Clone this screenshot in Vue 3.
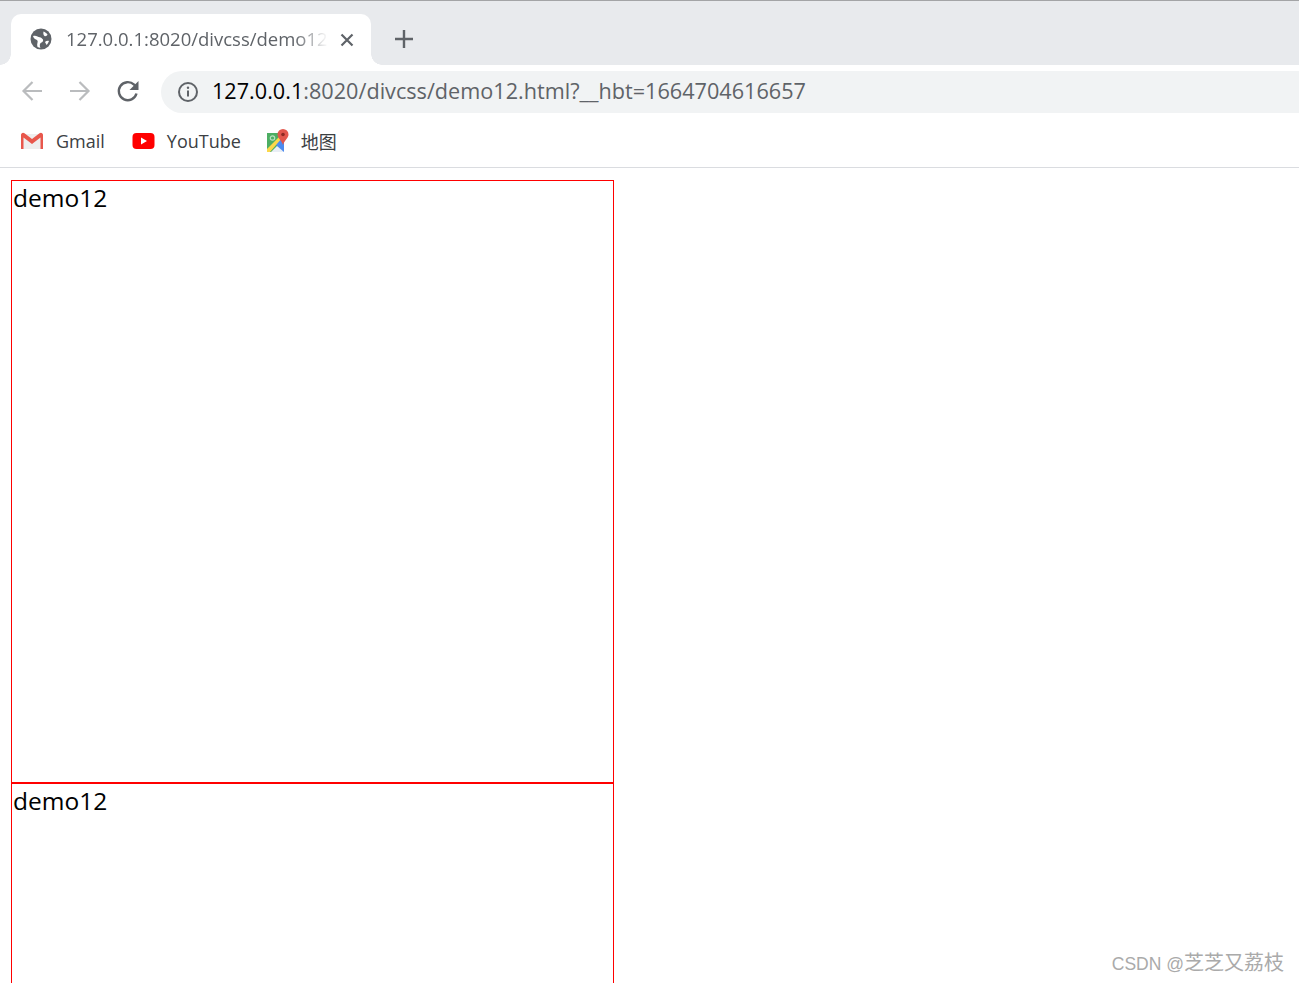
<template>
  <div class="page">
    <!-- Browser chrome -->
    <header class="chrome">
      <div class="tab-strip">
        <div class="tab">
          <svg class="favicon" width="22" height="22" viewBox="0 0 22 22">
            <circle cx="11" cy="11" r="10.500" fill="#5f6368" />
            <path d="M3 8c1.500-.5 3-.5 4.500.5s3 .5 4 1.500 2 1.500 1.500 3-2.500 1.500-3 3 0 3 .5 4c-1-.2-2-.5-3-1-.5-1.500-.5-3 0-4.500s0-2.500-1.500-3-2.500-1.500-3-3.500z" fill="#fff" />
            <path d="M13.500 3.500c1.500.5 3 1.500 4 3-.5 1.500-2 2-3 1.500s-1.500-2.500-1-4.500zM15 14c1-1 2.500-1.500 4-1-.5 1.500-1.500 3-2.500 4-.5-1-.5-1.500-1-2z" fill="#fff" />
          </svg>
          <span class="tab-title">127.0.0.1:8020/divcss/demo12</span>
          <svg class="tab-close" width="14" height="14" viewBox="0 0 14 14">
            <path d="M1.500 1.500l11 11M12.500 1.500l-11 11" stroke="#5f6368" stroke-width="2.200" fill="none" />
          </svg>
        </div>
        <svg class="new-tab" width="20" height="20" viewBox="0 0 20 20">
          <path d="M10 1v18M1 10h18" stroke="#5f6368" stroke-width="2.400" fill="none" />
        </svg>
      </div>

      <div class="toolbar">
        <svg class="nav-icon" width="24" height="24" viewBox="0 0 24 24">
          <path d="M22 12H4M12.500 3L3.500 12l9 9" stroke="#babcbe" stroke-width="2.200" fill="none" />
        </svg>
        <svg class="nav-icon" width="24" height="24" viewBox="0 0 24 24">
          <path d="M2 12h18M11.500 3l9 9-9 9" stroke="#babcbe" stroke-width="2.200" fill="none" />
        </svg>
        <svg class="nav-icon" width="24" height="24" viewBox="0 0 24 24">
          <path d="M20.500 14.500a9 9 0 1 1-2.400-8.800L20.500 8" stroke="#5f6368" stroke-width="2.400" fill="none" />
          <path d="M22.500 2v9h-9z" fill="#5f6368" />
        </svg>
        <div class="omnibox">
          <svg width="22" height="22" viewBox="0 0 22 22">
            <circle cx="11" cy="11" r="9" stroke="#5f6368" stroke-width="2" fill="none" />
            <path d="M11 9.500v6" stroke="#5f6368" stroke-width="2" />
            <circle cx="11" cy="6.800" r="1.200" fill="#5f6368" />
          </svg>
          <span class="url"><span class="host">127.0.0.1</span>:8020/divcss/demo12.html?__hbt=1664704616657</span>
        </div>
      </div>

      <nav class="bookmarks">
        <a v-for="b in bookmarks" :key="b.label" class="bookmark" :class="b.cls">
          <svg v-if="b.icon === 'gmail'" width="24" height="18" viewBox="0 0 24 18">
            <path d="M2 2h20v15H2z" fill="#eeeeee" />
            <path d="M1 17V3c0-2 2-3 3.500-1.800L12 7l7.500-5.800C21 0 23 1 23 3v14h-2.500V5.500L12 12 3.500 5.500V17z" fill="#e8574c" />
          </svg>
          <svg v-else-if="b.icon === 'youtube'" width="23" height="18" viewBox="0 0 23 18">
            <rect x="0.500" y="1" width="22" height="16" rx="4" fill="#f00" />
            <path d="M9 5.500v7l6-3.500z" fill="#fff" />
          </svg>
          <svg v-else width="23" height="24" viewBox="0 0 23 24">
            <path d="M1 4h17v19H1z" fill="#4dae63" />
            <path d="M9 14l9-9v18h-3z" fill="#4c8bf0" />
            <path d="M5 23l6-6 7 6z" fill="#e9eef5" />
            <path d="M1 20L14 7l2 2L4 23H1z" fill="#fbd84b" />
            <circle cx="6.500" cy="9" r="2.200" fill="none" stroke="#b9e0c0" stroke-width="1.200" />
            <path d="M17 0a5.500 5.500 0 0 1 5.500 5.500c0 3.500-3.500 5-5.500 10.500-2-5.500-5.500-7-5.500-10.500A5.500 5.500 0 0 1 17 0z" fill="#e2574c" />
            <circle cx="17" cy="5.500" r="1.800" fill="#8e2a22" />
          </svg>
          <span>{{ b.label }}</span>
        </a>
      </nav>
    </header>

    <!-- Page content -->
    <main class="content">
      <div v-for="n in 2" :key="n" class="demo">demo12</div>
    </main>

    <div class="watermark"><span class="wm-latin">CSDN @</span>芝芝又荔枝</div>
  </div>
</template>

<script setup>
const bookmarks = [
  { label: 'Gmail', icon: 'gmail', cls: 'bm-gmail' },
  { label: 'YouTube', icon: 'youtube', cls: 'bm-youtube' },
  { label: '地图', icon: 'maps', cls: 'bm-maps' },
]
</script>

<style>
html,
body {
  margin: 0;
  background: #fff;
  overflow: hidden;
}
</style>

<style scoped>
.page {
  position: relative;
  height: 983px;
  overflow: hidden;
  background: #fff;
  font-family: "Open Sans", "Noto Sans CJK SC", sans-serif;
}

.chrome {
  height: 168px;
  box-sizing: border-box;
  border-bottom: 1px solid #dadce0;
}

.tab-strip {
  height: 65px;
  box-sizing: border-box;
  border-top: 1px solid #a3a4a6;
  background: #e8eaed;
  padding: 13px 0 0 11px;
  display: flex;
  align-items: flex-start;
}

.tab {
  position: relative;
  width: 360px;
  height: 51px;
  box-sizing: border-box;
  background: #fff;
  border-radius: 10px 10px 0 0;
  display: flex;
  align-items: center;
  padding: 0 17px 0 19px;
}

.tab::before,
.tab::after {
  content: "";
  position: absolute;
  bottom: 0;
  width: 11px;
  height: 11px;
}

.tab::before {
  left: -11px;
  background: radial-gradient(circle at 0 0, transparent 10.500px, #fff 11px);
}

.tab::after {
  right: -11px;
  background: radial-gradient(circle at 100% 0, transparent 10.500px, #fff 11px);
}

.favicon {
  flex: none;
  margin-bottom: 1px;
}

.tab-title {
  flex: 1;
  margin: 0 0 2px 14px;
  white-space: nowrap;
  font-size: 18.500px;
  color: #5f6368;
  -webkit-mask-image: linear-gradient(to right, #000 228px, transparent 262px);
  mask-image: linear-gradient(to right, #000 228px, transparent 262px);
}

.tab-close {
  flex: none;
  margin-left: 12px;
}

.new-tab {
  margin: 15px 0 0 23px;
}

.toolbar {
  height: 54px;
  box-sizing: border-box;
  padding: 6px 0 6px 20px;
  display: flex;
  align-items: center;
  gap: 24px;
}

.nav-icon {
  margin-bottom: 2px;
}

.omnibox {
  flex: 1;
  height: 42px;
  margin-left: -3px;
  padding-left: 16px;
  border-radius: 21px 0 0 21px;
  background: #f1f3f4;
  display: flex;
  align-items: center;
  gap: 13px;
}

.url {
  margin-bottom: 3px;
  font-size: 21.650px;
  color: #5f6368;
  white-space: nowrap;
}

.host {
  color: #000;
}

.bookmarks {
  height: 48px;
  box-sizing: border-box;
  padding: 0 0 5px 20px;
  display: flex;
  align-items: center;
}

.bookmark {
  display: flex;
  align-items: center;
  font-size: 18px;
  color: #3c4043;
}

.bm-gmail {
  gap: 12px;
  margin-right: 27px;
}

.bm-youtube {
  gap: 12px;
  margin-right: 25px;
}

.bm-maps {
  gap: 12px;
}

.content {
  padding: 12px 0 0 11px;
}

.demo {
  width: 600px;
  height: 601px;
  padding-left: 1px;
  border: 1px solid #f00;
  font-size: 24.500px;
  line-height: 33px;
  color: #000;
}

.watermark {
  position: absolute;
  right: 15px;
  bottom: 7px;
  font-family: "Liberation Sans", "Noto Sans CJK SC", sans-serif;
  font-size: 20px;
  color: #aaaaaa;
  white-space: nowrap;
}

.wm-latin {
  font-size: 17.500px;
}
</style>
